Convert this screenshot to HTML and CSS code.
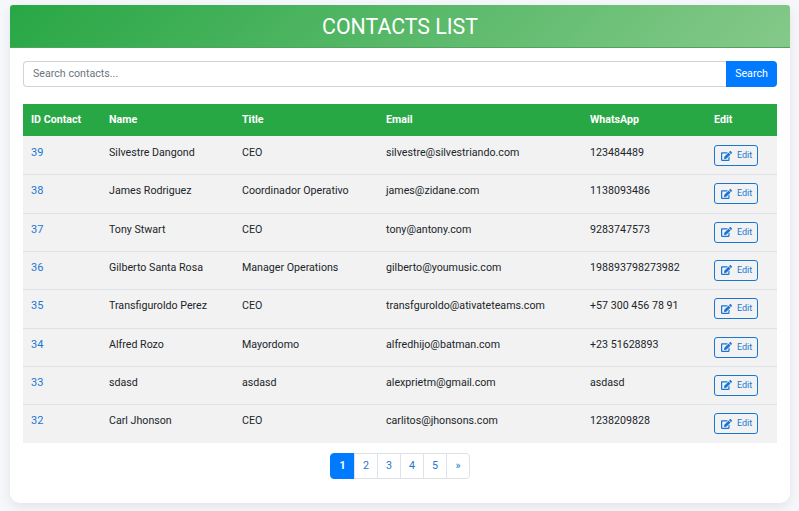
FILE: index.html
```html
<!DOCTYPE html>
<html lang="en">
<head>
<meta charset="utf-8">
<title>Contacts List</title>
<link rel="stylesheet" href="styles.css">
</head>
<body>
<svg class="defs" width="0" height="0" aria-hidden="true"><symbol id="edit" viewBox="0 0 576 512"><path d="M402.6 83.2l90.2 90.2c3.8 3.8 3.8 10 0 13.8L274.4 405.6l-92.8 10.3c-12.4 1.4-22.9-9.1-21.5-21.5l10.3-92.8L388.8 83.2c3.8-3.8 10-3.8 13.8 0zm162-22.9l-48.8-48.8c-15.2-15.2-39.9-15.2-55.2 0l-35.4 35.4c-3.8 3.8-3.8 10 0 13.8l90.2 90.2c3.8 3.8 10 3.8 13.8 0l35.4-35.4c15.2-15.3 15.2-40 0-55.2zM384 346.2V448H64V128h229.8c3.2 0 6.2-1.3 8.5-3.5l40-40c7.6-7.6 2.2-20.5-8.5-20.5H48C21.5 64 0 85.5 0 112v352c0 26.5 21.5 48 48 48h352c26.5 0 48-21.5 48-48V306.2c0-10.7-12.9-16-20.5-8.5l-40 40c-2.2 2.3-3.5 5.3-3.5 8.5z"/></symbol></svg>
<main class="card">
  <header class="card-header"><h1>CONTACTS LIST</h1></header>
  <div class="card-body">
    <form class="search">
      <input class="search-input" type="text" placeholder="Search contacts...">
      <button class="search-btn" type="button">Search</button>
    </form>
    <table class="contacts">
      <colgroup><col class="c1"><col class="c2"><col class="c3"><col class="c4"><col class="c5"><col class="c6"></colgroup>
      <thead>
        <tr><th>ID Contact</th><th>Name</th><th>Title</th><th>Email</th><th>WhatsApp</th><th>Edit</th></tr>
      </thead>
      <tbody>
        <tr><td><a class="id" href="#">39</a></td><td>Silvestre Dangond</td><td>CEO</td><td>silvestre@silvestriando.com</td><td>123484489</td><td><a class="edit" href="#"><svg class="ico"><use href="#edit"/></svg>Edit</a></td></tr>
        <tr><td><a class="id" href="#">38</a></td><td>James Rodriguez</td><td>Coordinador Operativo</td><td>james@zidane.com</td><td>1138093486</td><td><a class="edit" href="#"><svg class="ico"><use href="#edit"/></svg>Edit</a></td></tr>
        <tr><td><a class="id" href="#">37</a></td><td>Tony Stwart</td><td>CEO</td><td>tony@antony.com</td><td>9283747573</td><td><a class="edit" href="#"><svg class="ico"><use href="#edit"/></svg>Edit</a></td></tr>
        <tr><td><a class="id" href="#">36</a></td><td>Gilberto Santa Rosa</td><td>Manager Operations</td><td>gilberto@youmusic.com</td><td>198893798273982</td><td><a class="edit" href="#"><svg class="ico"><use href="#edit"/></svg>Edit</a></td></tr>
        <tr><td><a class="id" href="#">35</a></td><td>Transfiguroldo Perez</td><td>CEO</td><td>transfguroldo@ativateteams.com</td><td>+57 300 456 78 91</td><td><a class="edit" href="#"><svg class="ico"><use href="#edit"/></svg>Edit</a></td></tr>
        <tr><td><a class="id" href="#">34</a></td><td>Alfred Rozo</td><td>Mayordomo</td><td>alfredhijo@batman.com</td><td>+23 51628893</td><td><a class="edit" href="#"><svg class="ico"><use href="#edit"/></svg>Edit</a></td></tr>
        <tr><td><a class="id" href="#">33</a></td><td>sdasd</td><td>asdasd</td><td>alexprietm@gmail.com</td><td>asdasd</td><td><a class="edit" href="#"><svg class="ico"><use href="#edit"/></svg>Edit</a></td></tr>
        <tr><td><a class="id" href="#">32</a></td><td>Carl Jhonson</td><td>CEO</td><td>carlitos@jhonsons.com</td><td>1238209828</td><td><a class="edit" href="#"><svg class="ico"><use href="#edit"/></svg>Edit</a></td></tr>
      </tbody>
    </table>
    <nav class="pagination">
      <a class="page active" href="#">1</a><a class="page" href="#">2</a><a class="page" href="#">3</a><a class="page" href="#">4</a><a class="page" href="#">5</a><a class="page" href="#">»</a>
    </nav>
  </div>
</main>
</body>
</html>
```
FILE: styles.css
```css
* { box-sizing: border-box; }
html, body { height: 100%; }
body {
  margin: 0;
  padding: 5px 9px 0 10px;
  background: #f5f7fb;
  font-family: Roboto, "Liberation Sans", sans-serif;
  font-size: 10.67px;
  color: #212529;
  overflow: hidden;
}
.defs { position: absolute; }
.card {
  height: 498px;
  background: #fff;
  border-radius: 3px 3px 10px 10px;
  box-shadow: 0 4px 12px rgba(0, 0, 0, 0.08);
}
.card-header {
  height: 43px;
  display: flex;
  align-items: center;
  justify-content: center;
  background: linear-gradient(135deg, #28a745, #85c98a);
  border-bottom: 1px solid #4fa55f;
  border-radius: 3px 3px 0 0;
}
.card-header h1 {
  margin: 0;
  font-size: 21.33px;
  font-weight: 400;
  color: #fff;
}
.card-body { padding: 13px 13px 0; }
.search { display: flex; height: 26px; margin-bottom: 17px; }
.search-input {
  flex: 1;
  min-width: 0;
  padding: 0 9px 2px;
  border: 1px solid #ced4da;
  border-right: 0;
  border-radius: 4px 0 0 4px;
  font: 10.67px Roboto, sans-serif;
  color: #495057;
  outline: none;
}
.search-input::placeholder { color: #6c757d; opacity: 1; }
.search-btn {
  width: 51px;
  padding: 0 0 2px;
  border: 0;
  border-radius: 0 4px 4px 0;
  background: #007bff;
  color: #fff;
  font: 10.67px Roboto, sans-serif;
}
.contacts { width: 754px; border-collapse: separate; border-spacing: 0; table-layout: fixed; }
.c1 { width: 78px; } .c2 { width: 133px; } .c3 { width: 144px; }
.c4 { width: 204px; } .c5 { width: 124px; } .c6 { width: 71px; }
th {
  height: 32px;
  padding: 0 8px 1px;
  background: #28a745;
  color: #fff;
  font-weight: 700;
  text-align: left;
  vertical-align: middle;
}
td {
  height: 38.33px;
  padding: 8px 8px 0;
  background: #f2f2f2;
  border-top: 1px solid #dee2e6;
  line-height: 16px;
  vertical-align: top;
  white-space: nowrap;
}
tbody tr:first-child td { border-top-color: #f2f2f2; }
tbody tr:last-child td { height: 38.7px; }
.id { color: #1a76d2; text-decoration: none; font-size: 11px; }
.edit {
  display: inline-flex;
  align-items: center;
  gap: 5px;
  width: 44px;
  height: 21px;
  padding-left: 6px;
  border: 1px solid #1a76d2;
  border-radius: 3px;
  color: #1a76d2;
  font-size: 9px;
  line-height: 1;
  text-decoration: none;
  vertical-align: top;
}
.ico { width: 11px; height: 10px; fill: currentColor; flex: none; }
.pagination { display: flex; justify-content: center; margin-top: 10px; }
.page {
  width: 24px;
  height: 26px;
  display: flex;
  align-items: center;
  justify-content: center;
  border: 1px solid #dee2e6;
  color: #1a76d2;
  text-decoration: none;
  font-size: 10.67px;
}
.page + .page { margin-left: -1px; }
.page.active {
  width: 25px;
  background: #007bff;
  border-color: #007bff;
  color: #fff;
  font-weight: 700;
  border-radius: 4px 0 0 4px;
}
.page:last-child { border-radius: 0 4px 4px 0; }
```
